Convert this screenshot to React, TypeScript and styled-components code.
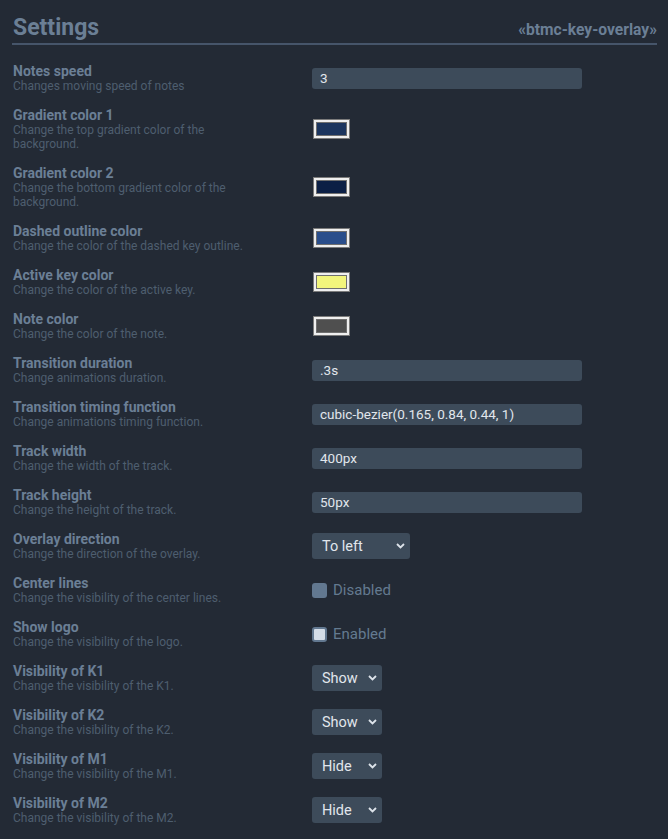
import React from "react";
import styled, { createGlobalStyle } from "styled-components";

const GlobalStyle = createGlobalStyle`
  html, body {
    margin: 0;
    padding: 0;
    background: #232a35;
  }
  body {
    font-family: Roboto, "Liberation Sans", sans-serif;
  }
`;

const Page = styled.div`
  padding: 14px 11px 20px 12px;
  background: #232a35;
  min-height: 100vh;
  box-sizing: border-box;
`;

const Header = styled.header`
  display: flex;
  justify-content: space-between;
  align-items: baseline;
  padding-bottom: 1px;
  border-bottom: 2px solid #46556a;
  margin-bottom: 18px;
`;

const Title = styled.h1`
  margin: 0;
  font-size: 23px;
  line-height: 28px;
  font-weight: 700;
  color: #6b7f95;
  padding-left: 1px;
`;

const Badge = styled.span`
  font-size: 15.6px;
  font-weight: 700;
  color: #6b7f95;
`;

const List = styled.div`
  display: flex;
  flex-direction: column;
  gap: 14px;
`;

const Row = styled.div`
  display: grid;
  grid-template-columns: 300px 1fr;
  align-items: center;
`;

const LabelCol = styled.div`
  display: flex;
  flex-direction: column;
  padding-left: 1px;
`;

const Name = styled.div`
  font-size: 14px;
  line-height: 16px;
  font-weight: 700;
  color: #6b7f95;
`;

const Desc = styled.div`
  font-size: 12px;
  line-height: 14px;
  color: #4e5e6f;
  max-width: 245px;
`;

const TextInput = styled.div`
  width: 270px;
  height: 21px;
  box-sizing: border-box;
  background: #3d4b5a;
  border-radius: 3px;
  padding-left: 8px;
  display: flex;
  align-items: center;
  font-size: 13.5px;
  color: #e1e6ec;
`;

const Swatch = styled.div`
  width: 37px;
  height: 20px;
  box-sizing: border-box;
  border: 1px solid #7b7b7b;
  background: #efefef;
  padding: 2px;
  display: flex;
  margin-left: 1px;
`;

const SwatchFill = styled.div<{ $color: string }>`
  flex: 1;
  border: 1px solid #6f6f6f;
  background: ${(p) => p.$color};
`;

const SelectBox = styled.div<{ $width: number }>`
  width: ${(p) => p.$width}px;
  height: 26px;
  box-sizing: border-box;
  background: #3d4b5a;
  border-radius: 3px;
  padding: 0 5px 0 10px;
  display: flex;
  align-items: center;
  justify-content: space-between;
  font-size: 14.5px;
  color: #e1e6ec;
`;

const CheckWrap = styled.div`
  display: flex;
  align-items: center;
  gap: 6px;
  font-size: 15px;
  color: #647a90;
`;

const Box = styled.span<{ $on: boolean }>`
  width: 15px;
  height: 15px;
  box-sizing: border-box;
  border-radius: 3px;
  background: ${(p) => (p.$on ? "#d4dde8" : "#627890")};
  border: ${(p) => (p.$on ? "2px solid #627890" : "none")};
`;

const Chevron = () => (
  <svg width="9" height="6" viewBox="0 0 9 6">
    <path d="M1 1 L4.5 4.5 L8 1" stroke="#dde3ea" strokeWidth="1.8" fill="none" />
  </svg>
);

type Ctrl =
  | { kind: "text"; value: string }
  | { kind: "color"; value: string }
  | { kind: "select"; value: string; width: number }
  | { kind: "check"; on: boolean };

const rows: { name: string; desc: string; ctrl: Ctrl }[] = [
  { name: "Notes speed", desc: "Changes moving speed of notes", ctrl: { kind: "text", value: "3" } },
  { name: "Gradient color 1", desc: "Change the top gradient color of the background.", ctrl: { kind: "color", value: "#1c355e" } },
  { name: "Gradient color 2", desc: "Change the bottom gradient color of the background.", ctrl: { kind: "color", value: "#0b1f45" } },
  { name: "Dashed outline color", desc: "Change the color of the dashed key outline.", ctrl: { kind: "color", value: "#2a4e8b" } },
  { name: "Active key color", desc: "Change the color of the active key.", ctrl: { kind: "color", value: "#f2f57c" } },
  { name: "Note color", desc: "Change the color of the note.", ctrl: { kind: "color", value: "#4f4f4f" } },
  { name: "Transition duration", desc: "Change animations duration.", ctrl: { kind: "text", value: ".3s" } },
  { name: "Transition timing function", desc: "Change animations timing function.", ctrl: { kind: "text", value: "cubic-bezier(0.165, 0.84, 0.44, 1)" } },
  { name: "Track width", desc: "Change the width of the track.", ctrl: { kind: "text", value: "400px" } },
  { name: "Track height", desc: "Change the height of the track.", ctrl: { kind: "text", value: "50px" } },
  { name: "Overlay direction", desc: "Change the direction of the overlay.", ctrl: { kind: "select", value: "To left", width: 98 } },
  { name: "Center lines", desc: "Change the visibility of the center lines.", ctrl: { kind: "check", on: false } },
  { name: "Show logo", desc: "Change the visibility of the logo.", ctrl: { kind: "check", on: true } },
  { name: "Visibility of K1", desc: "Change the visibility of the K1.", ctrl: { kind: "select", value: "Show", width: 70 } },
  { name: "Visibility of K2", desc: "Change the visibility of the K2.", ctrl: { kind: "select", value: "Show", width: 70 } },
  { name: "Visibility of M1", desc: "Change the visibility of the M1.", ctrl: { kind: "select", value: "Hide", width: 70 } },
  { name: "Visibility of M2", desc: "Change the visibility of the M2.", ctrl: { kind: "select", value: "Hide", width: 70 } },
];

function Control({ ctrl }: { ctrl: Ctrl }) {
  switch (ctrl.kind) {
    case "text":
      return <TextInput>{ctrl.value}</TextInput>;
    case "color":
      return (
        <Swatch>
          <SwatchFill $color={ctrl.value} />
        </Swatch>
      );
    case "select":
      return (
        <SelectBox $width={ctrl.width}>
          <span>{ctrl.value}</span>
          <Chevron />
        </SelectBox>
      );
    case "check":
      return (
        <CheckWrap>
          <Box $on={ctrl.on} />
          <span>{ctrl.on ? "Enabled" : "Disabled"}</span>
        </CheckWrap>
      );
  }
}

export default function App() {
  return (
    <>
      <GlobalStyle />
      <Page>
        <Header>
          <Title>Settings</Title>
          <Badge>«btmc-key-overlay»</Badge>
        </Header>
        <List>
          {rows.map((r) => (
            <Row key={r.name}>
              <LabelCol>
                <Name>{r.name}</Name>
                <Desc>{r.desc}</Desc>
              </LabelCol>
              <Control ctrl={r.ctrl} />
            </Row>
          ))}
        </List>
      </Page>
    </>
  );
}
